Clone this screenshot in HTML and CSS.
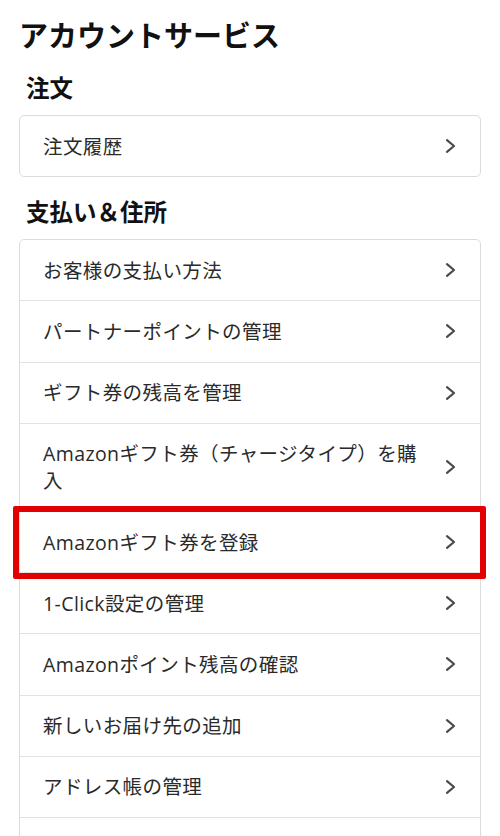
FILE: index.html
```html
<!DOCTYPE html>
<html lang="ja">
<head>
<meta charset="utf-8">
<title>アカウントサービス</title>
<link rel="stylesheet" href="styles.css">
</head>
<body>
<main class="page">
  <h1 class="title">アカウントサービス</h1>

  <h2 class="section-title">注文</h2>
  <ul class="card">
    <li class="row"><span class="label">注文履歴</span><svg class="chev" viewBox="0 0 11 16"><path d="M2 2.2 L9 8 L2 13.8"/></svg></li>
  </ul>

  <h2 class="section-title">支払い＆住所</h2>
  <ul class="card">
    <li class="row"><span class="label">お客様の支払い方法</span><svg class="chev" viewBox="0 0 11 16"><path d="M2 2.2 L9 8 L2 13.8"/></svg></li>
    <li class="row"><span class="label">パートナーポイントの管理</span><svg class="chev" viewBox="0 0 11 16"><path d="M2 2.2 L9 8 L2 13.8"/></svg></li>
    <li class="row"><span class="label">ギフト券の残高を管理</span><svg class="chev" viewBox="0 0 11 16"><path d="M2 2.2 L9 8 L2 13.8"/></svg></li>
    <li class="row"><span class="label">Amazonギフト券（チャージタイプ）を購入</span><svg class="chev" viewBox="0 0 11 16"><path d="M2 2.2 L9 8 L2 13.8"/></svg></li>
    <li class="row highlighted"><span class="label">Amazonギフト券を登録</span><svg class="chev" viewBox="0 0 11 16"><path d="M2 2.2 L9 8 L2 13.8"/></svg></li>
    <li class="row"><span class="label">1-Click設定の管理</span><svg class="chev" viewBox="0 0 11 16"><path d="M2 2.2 L9 8 L2 13.8"/></svg></li>
    <li class="row"><span class="label">Amazonポイント残高の確認</span><svg class="chev" viewBox="0 0 11 16"><path d="M2 2.2 L9 8 L2 13.8"/></svg></li>
    <li class="row"><span class="label">新しいお届け先の追加</span><svg class="chev" viewBox="0 0 11 16"><path d="M2 2.2 L9 8 L2 13.8"/></svg></li>
    <li class="row"><span class="label">アドレス帳の管理</span><svg class="chev" viewBox="0 0 11 16"><path d="M2 2.2 L9 8 L2 13.8"/></svg></li>
    <li class="row"><span class="label">&nbsp;</span></li>
  </ul>
</main>
</body>
</html>
```

FILE: styles.css
```css
html, body {
  margin: 0;
  padding: 0;
  background: #ffffff;
}

body {
  font-family: "Noto Sans CJK JP", "Noto Sans", sans-serif;
  color: #222;
  overflow: hidden;
}

.page {
  padding: 15px 19px 0 19px;
}

.title {
  margin: 0;
  font-size: 29px;
  line-height: 38px;
  font-weight: 700;
  color: #111;
}

.section-title {
  margin: 18px 0 12px 7px;
  font-size: 23.5px;
  line-height: 32px;
  font-weight: 700;
  color: #111;
}

.card {
  list-style: none;
  margin: 0;
  padding: 0;
  border: 1px solid #dcdcdc;
  border-radius: 5px;
  background: #fff;
}

.row {
  position: relative;
  display: flex;
  align-items: center;
  gap: 20px;
  padding: 16.6px 24px 16.6px 23px;
  font-family: "Open Sans", "Noto Sans CJK JP", sans-serif;
  font-size: 19.5px;
  line-height: 27px;
  letter-spacing: 0.4px;
  color: #2a2a2a;
}

.row + .row {
  border-top: 1px solid #e2e2e2;
}

.label {
  flex: 1;
  min-width: 0;
}

.chev {
  flex: none;
  width: 11px;
  height: 16px;
}

.chev path {
  fill: none;
  stroke: #4a4a4a;
  stroke-width: 2.2;
  stroke-linecap: round;
  stroke-linejoin: round;
}

.highlighted::after {
  content: "";
  position: absolute;
  top: -6px;
  left: -7px;
  right: -6px;
  bottom: -7px;
  border: 6.5px solid #e30000;
  border-radius: 2px;
  pointer-events: none;
}
```
